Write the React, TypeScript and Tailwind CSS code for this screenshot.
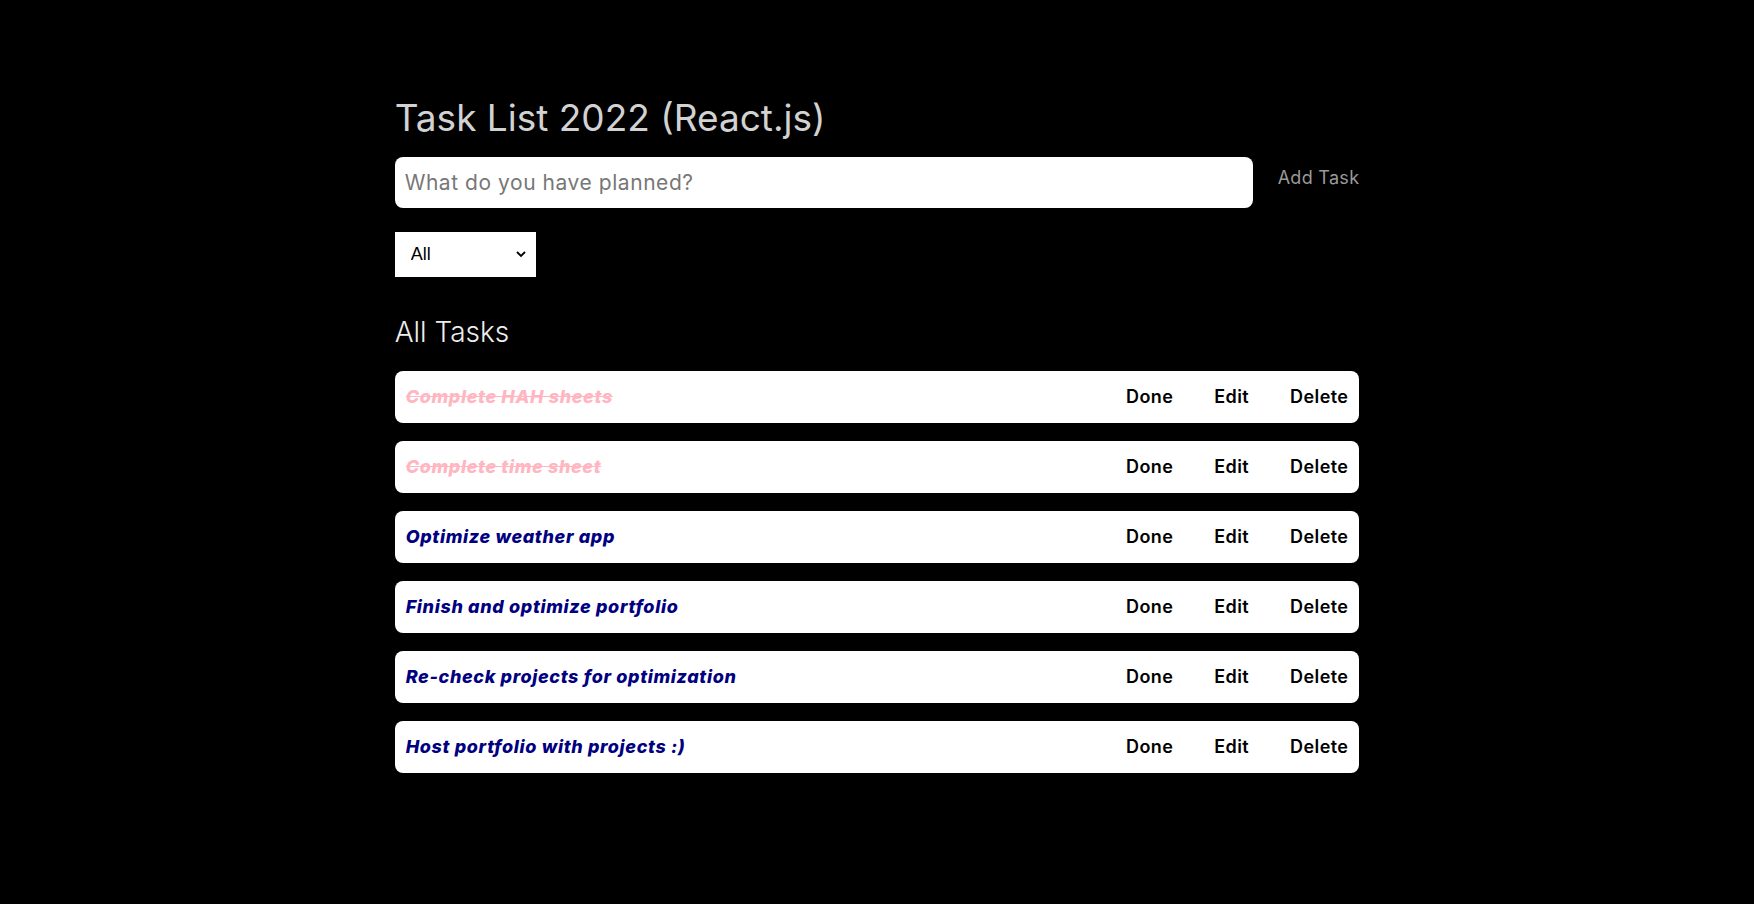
import { useState } from "react";

type Task = { id: number; name: string; done: boolean };

const initialTasks: Task[] = [
  { id: 1, name: "Complete HAH sheets", done: true },
  { id: 2, name: "Complete time sheet", done: true },
  { id: 3, name: "Optimize weather app", done: false },
  { id: 4, name: "Finish and optimize portfolio", done: false },
  { id: 5, name: "Re-check projects for optimization", done: false },
  { id: 6, name: "Host portfolio with projects :)", done: false },
];

export default function App() {
  const [tasks, setTasks] = useState<Task[]>(initialTasks);
  const [text, setText] = useState("");
  const [filter, setFilter] = useState("All");

  function addTask() {
    const name = text.trim();
    if (!name) return;
    setTasks([...tasks, { id: Date.now(), name, done: false }]);
    setText("");
  }

  function toggle(id: number) {
    setTasks(tasks.map((t) => (t.id === id ? { ...t, done: !t.done } : t)));
  }

  function remove(id: number) {
    setTasks(tasks.filter((t) => t.id !== id));
  }

  const visible = tasks.filter((t) =>
    filter === "All" ? true : filter === "Completed" ? t.done : !t.done
  );

  return (
    <div className="min-h-screen bg-black font-['Inter',sans-serif]">
      <div className="mx-auto w-[55%] pt-[95px]">
        <h1 className="text-[37px] leading-[46px] font-normal text-[#d2d2d2]">
          Task List 2022 (React.js)
        </h1>

        {/* Formulario */}
        <div className="mt-4 flex items-center justify-between">
          <input
            type="text"
            value={text}
            onChange={(e) => setText(e.target.value)}
            placeholder="What do you have planned?"
            className="h-[51px] w-[858px] rounded-lg bg-white px-[10px] text-[21px] tracking-[0.55px] text-black placeholder:text-[#777] focus:outline-none"
          />
          <button
            onClick={addTask}
            className="pb-[10px] text-[18px] tracking-[0.3px] text-[#9a9a9a]"
          >
            Add Task
          </button>
        </div>

        <div className="relative mt-6 h-[45px] w-[141px]">
          <select
            value={filter}
            onChange={(e) => setFilter(e.target.value)}
            className="h-full w-full appearance-none bg-white pl-[16px] font-['Liberation_Sans',sans-serif] text-[18px] text-black focus:outline-none"
          >
            <option>All</option>
            <option>Completed</option>
            <option>Uncompleted</option>
          </select>
          <svg
            className="pointer-events-none absolute top-[18px] right-[10px]"
            width="10"
            height="8"
            viewBox="0 0 10 8"
            fill="none"
          >
            <path d="M1 2l4 4 4-4" stroke="#000" strokeWidth="1.8" />
          </svg>
        </div>

        <h2 className="mt-[38px] text-[28px] leading-[34px] font-light text-[#ededed]">
          {filter} Tasks
        </h2>

        <ul className="mt-[22px] flex flex-col gap-[18px]">
          {visible.map((t) => (
            <li
              key={t.id}
              className="flex h-[52px] items-center justify-between rounded-lg bg-white pr-[11px] pb-[2px] pl-[11px]"
            >
              <span
                className={
                  t.done
                    ? "text-[18px] font-extrabold tracking-[0.65px] italic text-[#ffb6c1] line-through"
                    : "text-[18px] font-extrabold tracking-[0.65px] italic text-[#000080]"
                }
              >
                {t.name}
              </span>
              <div className="flex gap-[41px] text-[18px] font-semibold tracking-[0.4px] text-black">
                <button onClick={() => toggle(t.id)}>Done</button>
                <button>Edit</button>
                <button onClick={() => remove(t.id)}>Delete</button>
              </div>
            </li>
          ))}
        </ul>
      </div>
    </div>
  );
}
